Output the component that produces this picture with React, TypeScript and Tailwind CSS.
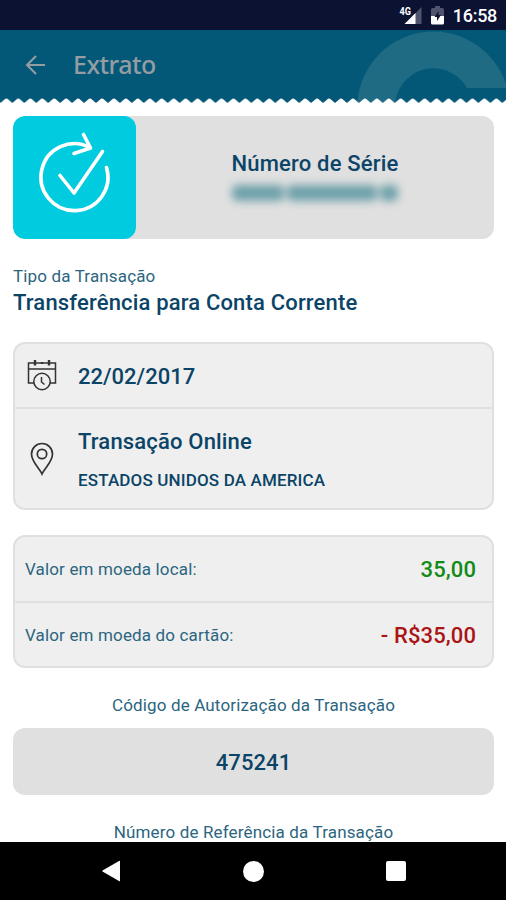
import React from 'react'

interface AmountRow {
  label: string
  value: string
  color: string
}

const amounts: AmountRow[] = [
  { label: 'Valor em moeda local:', value: '35,00', color: 'text-[#128a16]' },
  { label: 'Valor em moeda do cartão:', value: '- R$35,00', color: 'text-[#ab1414]' },
]

const StatusBar: React.FC = () => (
  <div className="flex h-[30px] shrink-0 items-center justify-end bg-[#0c1232] pr-[9px] text-white">
    <svg className="mr-[9px] h-[20px] w-[24px]" viewBox="0 0 24 20">
      <path d="M23.500 2V19H7Z" fill="#4f546c" />
      <path d="M17.500 8V19H6.500Z" fill="#fff" />
      <text x="1.500" y="9.500" fontSize="10" fontWeight="700" fontFamily="Roboto, sans-serif" fill="#fff" stroke="#0c1232" strokeWidth="1.500" paintOrder="stroke" textLength="11.500" lengthAdjust="spacingAndGlyphs">4G</text>
    </svg>
    <svg className="mr-[9px] h-[20px] w-[13px]" viewBox="0 0 13 20">
      <path d="M4 1H9V3H11.500Q13 3 13 4.500V11H0V4.500Q0 3 1.500 3H4Z" fill="#4f546c" />
      <path d="M0 11H13V18Q13 19.500 11.500 19.500H1.500Q0 19.500 0 18Z" fill="#fff" />
      <path d="M7.500 6L3.500 12H6V16L10 10H7.500Z" fill="#0c1232" />
    </svg>
    <span className="pt-[2px] text-[18px] leading-none font-medium tracking-[-0.3px]">16:58</span>
  </div>
)

const Header: React.FC = () => (
  <header className="relative flex h-[73px] shrink-0 items-start overflow-hidden bg-[#045877]">
    <svg className="absolute inset-0 h-[73px] w-[506px]" viewBox="0 0 506 73">
      <path d="M357 78A76.500 77 0 0 1 506 54V58H467A38.500 39 0 0 0 395 78Z" fill="#1f6b84" />
    </svg>
    <svg className="absolute bottom-0 left-0 h-[5px] w-[506px]" viewBox="0 0 506 5">
      <defs>
        <pattern id="ticket" width="11.950" height="5" patternUnits="userSpaceOnUse" x="0.400">
          <path d="M0 5L5 0.800Q6 0.200 7 0.800L11.950 5Z" fill="#fff" />
        </pattern>
      </defs>
      <rect width="506" height="5" fill="url(#ticket)" />
    </svg>
    <div className="flex h-[69px] items-center pl-[25px] text-[#949ca4]">
      <svg className="h-[20px] w-[20px]" viewBox="0 0 20 20" fill="none" stroke="currentColor" strokeWidth="2.100">
        <path d="M20 10H2M11 1L2 10L11 19" />
      </svg>
      <h1 className="pb-px pl-[28px] font-['Noto_Sans'] text-[25px] leading-none font-medium tracking-[-0.5px]">Extrato</h1>
    </div>
  </header>
)

const SerialCard: React.FC = () => (
  <div className="flex h-[123px] shrink-0 overflow-hidden rounded-[12px] bg-[#e0e0e0]">
    <div className="w-[123px] shrink-0 rounded-[12px] bg-[#00cbdf]">
      <svg className="h-[123px] w-[123px]" viewBox="0 0 123 123" fill="none" stroke="#fff" strokeWidth="3.600" strokeLinecap="round" strokeLinejoin="round">
        <path d="M93.500 51.500A33.500 33.500 0 1 1 77 31.500" />
        <path d="M70.500 18.500L77.500 32L61 37.500" />
        <path d="M47 59.500L61 77L89.500 35.500" />
      </svg>
    </div>
    <div className="flex flex-1 flex-col items-center pt-[35px]">
      <div className="text-[22px] leading-[26px] font-medium tracking-[0.2px]">Número de Série</div>
      <div className="mt-[8px] flex h-[16px] w-[166px] gap-[3px] blur-[4px]">
        <div className="w-[52px] rounded-[5px] bg-[#327f8d]/65" />
        <div className="flex-1 rounded-[5px] bg-[#327f8d]/65" />
        <div className="w-[18px] rounded-[5px] bg-[#327f8d]/65" />
      </div>
    </div>
  </div>
)

const CalendarIcon: React.FC = () => (
  <svg className="mb-[2px] h-[32px] w-[30px]" viewBox="0 0 30 32" fill="none" stroke="#333" strokeWidth="1.500">
    <path d="M7 24H1.500V4H28.500V24H23" />
    <path d="M1.500 10H28.500" />
    <path d="M8 1V6.500M22 1V6.500M15 3V5" strokeWidth="2.400" />
    <circle cx="15" cy="22.500" r="8.200" />
    <path d="M14.500 18V23L17.500 25.500" />
  </svg>
)

const PinIcon: React.FC = () => (
  <svg className="h-[34px] w-[24px]" viewBox="0 0 24 34" fill="none" stroke="#333" strokeWidth="1.700">
    <path d="M12 32C10 27 1.500 20 1.500 12A10.500 10.500 0 0 1 22.500 12C22.500 20 14 27 12 32Z" />
    <circle cx="12" cy="12" r="4.700" />
  </svg>
)

const NavBar: React.FC = () => (
  <nav className="flex h-[58px] shrink-0 items-center justify-between bg-black pr-[100px] pl-[101px]">
    <svg className="h-[22px] w-[20px]" viewBox="0 0 20 22" fill="#fff">
      <path d="M19 1V21Q19 21.500 18 21L1.500 11.500Q1 11 1.500 10.500L18 1Q19 0.500 19 1Z" />
    </svg>
    <div className="h-[21px] w-[21px] rounded-full bg-white" />
    <div className="h-[20px] w-[20px] rounded-[2px] bg-white" />
  </nav>
)

const App: React.FC = () => {
  return (
    <div className="flex h-[900px] w-[506px] flex-col overflow-hidden bg-white font-['Roboto',sans-serif] text-[#0b4467]">
      <StatusBar />
      <Header />

      <main className="flex min-h-0 flex-1 flex-col overflow-hidden pt-[13px] pr-[12px] pl-[13px]">
        <SerialCard />

        <section className="shrink-0 pt-[26px]">
          <div className="text-[17px] leading-[22px] tracking-[0.15px] text-[#2b6580]">Tipo da Transação</div>
          <div className="mt-[2px] text-[22px] leading-[28px] font-medium tracking-[0.17px]">
            Transferência para Conta Corrente
          </div>
        </section>

        <section className="mt-[25px] h-[168px] shrink-0 rounded-[12px] border-2 border-[#e0e0e0] bg-[#efefef]">
          <div className="flex h-[65px] items-center border-b-2 border-[#e0e0e0] pl-[12px]">
            <CalendarIcon />
            <span className="pt-px pl-[21px] text-[22px] font-medium">22/02/2017</span>
          </div>
          <div className="flex h-[99px] items-center pl-[15px]">
            <PinIcon />
            <div className="pt-[2px] pl-[24px]">
              <div className="text-[22px] leading-[28px] font-medium tracking-[0.17px]">Transação Online</div>
              <div className="mt-[13px] text-[17px] leading-[22px] font-medium tracking-[0.15px]">ESTADOS UNIDOS DA AMERICA</div>
            </div>
          </div>
        </section>

        <section className="mt-[25px] h-[133px] shrink-0 rounded-[12px] border-2 border-[#e0e0e0] bg-[#efefef]">
          {amounts.map(row => (
            <div key={row.label} className="flex h-[66px] items-center justify-between border-[#e0e0e0] pr-[16px] pl-[10px] first:border-b-2 last:h-[64px]">
              <span className="pt-[1px] text-[17px] tracking-[0.15px] text-[#2b6580]">{row.label}</span>
              <span className={`text-[22px] font-medium tracking-[0.1px] ${row.color}`}>{row.value}</span>
            </div>
          ))}
        </section>

        <div className="mt-[26px] shrink-0 text-center text-[17px] leading-[22px] tracking-[0.15px] text-[#2b6580]">
          Código de Autorização da Transação
        </div>
        <div className="mt-[12px] flex h-[67px] shrink-0 items-center justify-center rounded-[12px] bg-[#e0e0e0] pt-[2px] text-[22px] font-medium tracking-[0.1px]">
          475241
        </div>
        <div className="mt-[26px] shrink-0 text-center text-[17px] leading-[22px] tracking-[0.15px] text-[#2b6580]">
          Número de Referência da Transação
        </div>
      </main>

      <NavBar />
    </div>
  )
}

export default App
